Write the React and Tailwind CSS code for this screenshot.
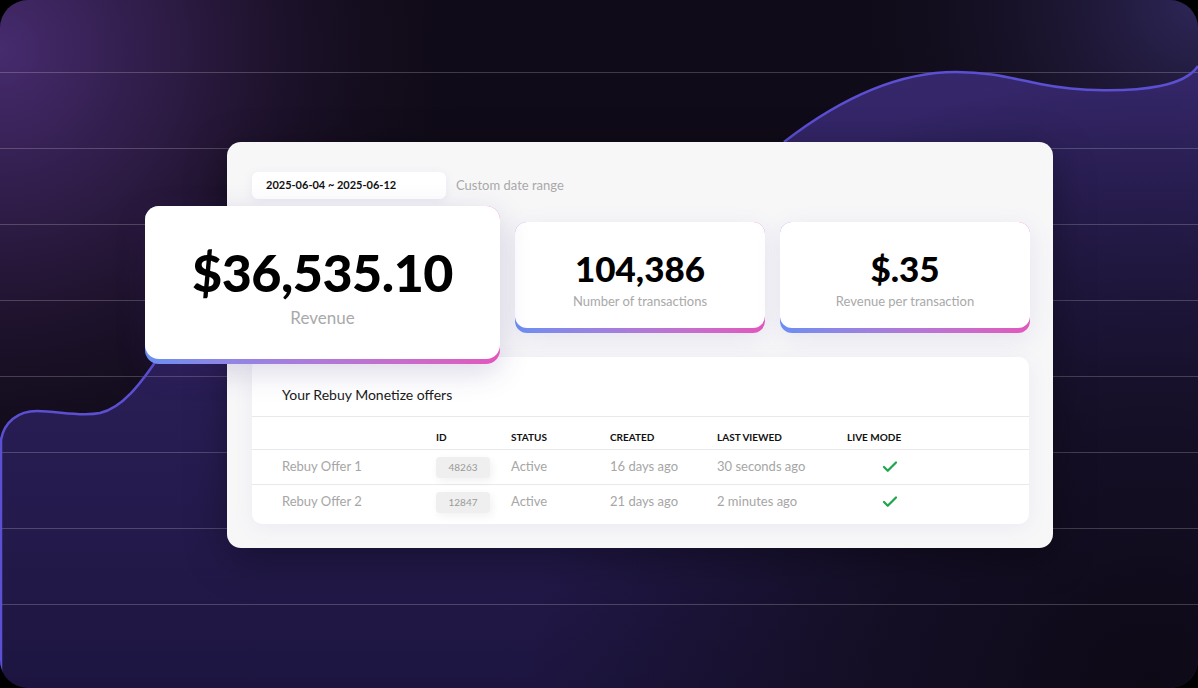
import React from 'react';
import { Check } from 'lucide-react';

const offers = [
  { name: 'Rebuy Offer 1', id: '48263', status: 'Active', created: '16 days ago', viewed: '30 seconds ago' },
  { name: 'Rebuy Offer 2', id: '12847', status: 'Active', created: '21 days ago', viewed: '2 minutes ago' },
];

const gridLines = [72, 148, 224, 300, 376, 452, 528, 604];

function Backdrop() {
  return (
    <svg className="absolute inset-0" width="1198" height="688" viewBox="0 0 1198 688">
      <defs>
        <radialGradient id="glowTL" cx="0" cy="50" r="480" gradientUnits="userSpaceOnUse">
          <stop offset="0" stopColor="#462b6e" />
          <stop offset="0.5" stopColor="#231534" />
          <stop offset="1" stopColor="#100b18" stopOpacity="0" />
        </radialGradient>
        <radialGradient id="glowTR" cx="1198" cy="0" r="380" gradientUnits="userSpaceOnUse">
          <stop offset="0" stopColor="#2e2658" />
          <stop offset="1" stopColor="#100b18" stopOpacity="0" />
        </radialGradient>
        <linearGradient id="waveFill" x1="0" y1="0" x2="0" y2="1">
          <stop offset="0" stopColor="#382970" />
          <stop offset="0.5" stopColor="#2b1f58" />
          <stop offset="1" stopColor="#1d1540" />
        </linearGradient>
        <radialGradient id="darkBR" cx="1150" cy="688" r="620" gradientUnits="userSpaceOnUse">
          <stop offset="0" stopColor="#0d0915" />
          <stop offset="0.45" stopColor="#120d20" stopOpacity="0.85" />
          <stop offset="1" stopColor="#120d20" stopOpacity="0" />
        </radialGradient>
        <clipPath id="waveClip">
          <path d="M0,440 C4,422 18,411 37,411 C58,411 80,417 100,413 C122,408 140,385 160,355 L500,200 L784,142 C815,118 880,72 956,72 C990,72 1010,78 1040,84 C1080,92 1130,92 1160,86 C1180,82 1192,75 1198,66 L1198,688 L0,688 Z" />
        </clipPath>
      </defs>
      <rect width="1198" height="688" fill="#100b18" />
      <rect width="1198" height="688" fill="url(#glowTL)" />
      <rect width="1198" height="688" fill="url(#glowTR)" />
      <g clipPath="url(#waveClip)">
        <rect width="1198" height="688" fill="url(#waveFill)" />
        <rect width="1198" height="688" fill="url(#darkBR)" />
      </g>
      {gridLines.map((y) => (
        <line key={y} x1="0" x2="1198" y1={y + 0.5} y2={y + 0.5} stroke="rgba(255,255,255,0.2)" strokeWidth="1" />
      ))}
      <path
        d="M1,688 L1,440 C4,422 18,411 37,411 C58,411 80,417 100,413 C122,408 140,385 160,355 M784,142 C815,118 880,72 956,72 C990,72 1010,78 1040,84 C1080,92 1130,92 1160,86 C1180,82 1192,75 1198,66"
        fill="none"
        stroke="#5b4fd2"
        strokeWidth="2.5"
      />
    </svg>
  );
}

function StatCard({ value, label, big }) {
  return (
    <div
      className={
        big
          ? 'relative z-10 ml-[-107px] w-[355px] h-[158px] rounded-[14px] bg-gradient-to-r from-[#6a8ef2] to-[#e256bd] shadow-[0_8px_30px_rgba(60,40,120,0.18)]'
          : 'mt-[16px] w-[250px] h-[111px] rounded-[12px] bg-gradient-to-r from-[#6a8ef2] to-[#e256bd] shadow-[0_6px_24px_rgba(110,100,180,0.12)]'
      }
    >
      <div
        className={
          big
            ? 'h-[153px] rounded-[14px] bg-white flex flex-col items-center pt-[38px]'
            : 'h-[106px] rounded-[12px] bg-white flex flex-col items-center pt-[26px]'
        }
      >
        <div
          className={
            big
              ? 'text-[52px] leading-[56px] font-black text-black tracking-[-0.5px]'
              : 'text-[35px] leading-[40px] font-black text-black'
          }
        >
          {value}
        </div>
        <div
          className={
            big
              ? 'mt-[8px] text-[17px] leading-[20px] text-[#a9a9a9]'
              : 'mt-[5px] text-[13px] leading-[16px] text-[#a9a9a9]'
          }
        >
          {label}
        </div>
      </div>
    </div>
  );
}

export default function App() {
  return (
    <div className="w-[1198px] h-[688px] bg-black" style={{ fontFamily: 'Lato, "Noto Sans", sans-serif' }}>
      <div className="relative w-full h-full rounded-[28px] overflow-hidden">
        <Backdrop />

        <div className="relative pt-[142px] pl-[227px]">
          <div className="w-[826px] h-[406px] rounded-[14px] bg-[#f7f7f8] shadow-[0_10px_40px_rgba(0,0,0,0.35)] pt-[30px] pl-[25px] flex flex-col">
            <div className="flex items-center h-[27px]">
              <div className="w-[194px] h-[27px] rounded-[6px] bg-white shadow-[0_2px_10px_rgba(110,100,180,0.10)] flex items-center pl-[14px] text-[11px] font-bold text-[#111]">
                2025-06-04 ~ 2025-06-12
              </div>
              <span className="ml-[10px] text-[13px] text-[#a9a9a9]">Custom date range</span>
            </div>

            <div className="mt-[7px] h-[151px] flex items-start gap-[15px]">
              <StatCard big value="$36,535.10" label="Revenue" />
              <StatCard value="104,386" label="Number of transactions" />
              <StatCard value="$.35" label="Revenue per transaction" />
            </div>

            <div className="relative w-[777px] rounded-[10px] bg-white shadow-[0_4px_20px_rgba(110,100,180,0.08)] pb-[5px]">
              <div className="pt-[30px] pb-[13px] pl-[30px] text-[14px] leading-[16px] text-[#1a1a1a]">
                Your Rebuy Monetize offers
              </div>
              <div className="border-t border-[#e9e9ec] h-[33px] pt-[14px] flex text-[10px] leading-[12px] font-bold text-[#111] uppercase">
                <div className="w-[184px]" />
                <div className="w-[75px]">ID</div>
                <div className="w-[99px]">Status</div>
                <div className="w-[107px]">Created</div>
                <div className="w-[130px]">Last Viewed</div>
                <div>Live Mode</div>
              </div>
              {offers.map((o) => (
                <div key={o.id} className="border-t border-[#e9e9ec] h-[35px] flex items-center text-[13px] text-[#a6a6a6]">
                  <div className="w-[184px] pl-[30px]">{o.name}</div>
                  <div className="w-[75px]">
                    <span className="inline-flex items-center justify-center w-[54px] h-[21px] rounded-[4px] bg-[#efefef] text-[10px] text-[#9a9a9a] shadow-[2px_3px_8px_rgba(0,0,0,0.06)]">
                      {o.id}
                    </span>
                  </div>
                  <div className="w-[99px]">{o.status}</div>
                  <div className="w-[107px]">{o.created}</div>
                  <div className="w-[130px]">{o.viewed}</div>
                  <div className="pl-[34px]">
                    <Check size={18} strokeWidth={3} className="text-[#1fa64a]" />
                  </div>
                </div>
              ))}
            </div>
          </div>
        </div>
      </div>
    </div>
  );
}
